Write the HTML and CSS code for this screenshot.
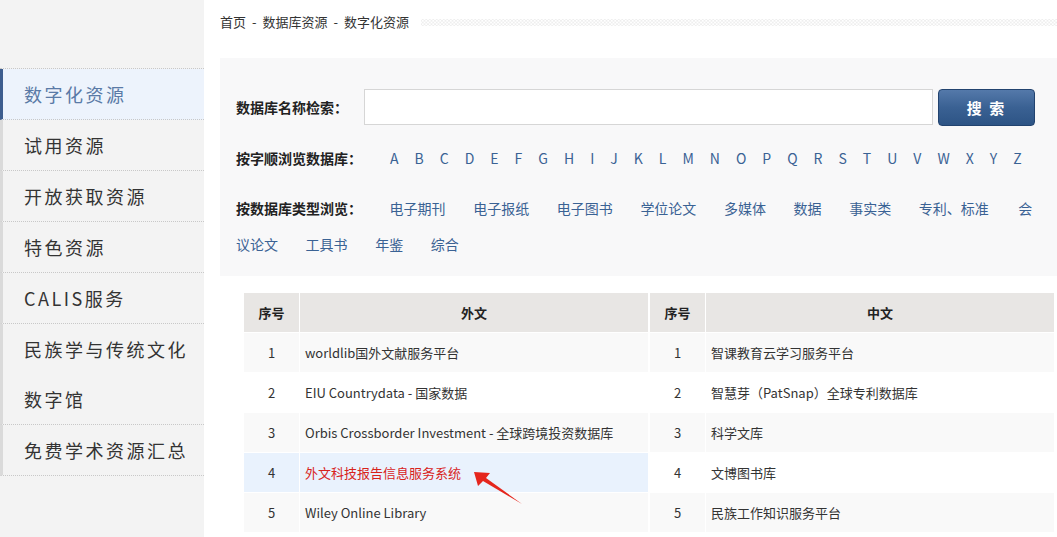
FILE: index.html
```html
<!DOCTYPE html>
<html lang="zh-CN">
<head>
    <meta charset="UTF-8">
    <meta name="viewport" content="width=device-width, initial-scale=1.0">
    <title>数字化资源</title>
    <link rel="stylesheet" href="styles.css">
</head>
<body>
    <div class="sidebar">
        <ul class="side-nav">
            <li class="active"><a href="#">数字化资源</a></li>
            <li><a href="#">试用资源</a></li>
            <li><a href="#">开放获取资源</a></li>
            <li><a href="#">特色资源</a></li>
            <li><a href="#">CALIS服务</a></li>
            <li><a href="#">民族学与传统文化数字馆</a></li>
            <li><a href="#">免费学术资源汇总</a></li>
        </ul>
    </div>

    <div class="main">
        <div class="crumbs">
            <span class="crumb-text"><a href="#">首页</a><span class="sep">-</span><a href="#">数据库资源</a><span class="sep">-</span><a href="#">数字化资源</a></span>
            <span class="crumb-line"></span>
        </div>

        <div class="search-panel">
            <form class="search-row">
                <label class="panel-label" for="dbName">数据库名称检索：</label>
                <input type="text" id="dbName">
                <button type="submit">搜 索</button>
            </form>

            <div class="letters">
                <span class="panel-label">按字顺浏览数据库：</span>
                <span class="letter-list">
                    <a href="#">A</a><a href="#">B</a><a href="#">C</a><a href="#">D</a><a href="#">E</a><a href="#">F</a><a href="#">G</a><a href="#">H</a><a href="#">I</a><a href="#">J</a><a href="#">K</a><a href="#">L</a><a href="#">M</a><a href="#">N</a><a href="#">O</a><a href="#">P</a><a href="#">Q</a><a href="#">R</a><a href="#">S</a><a href="#">T</a><a href="#">U</a><a href="#">V</a><a href="#">W</a><a href="#">X</a><a href="#">Y</a><a href="#">Z</a>
                </span>
            </div>

            <div class="types">
                <span class="panel-label">按数据库类型浏览：</span><a href="#">电子期刊</a><a href="#">电子报纸</a><a href="#">电子图书</a><a href="#">学位论文</a><a href="#">多媒体</a><a href="#">数据</a><a href="#">事实类</a><a href="#">专利、标准</a><a href="#">会议论文</a><a href="#">工具书</a><a href="#">年鉴</a><a href="#">综合</a>
            </div>
        </div>

        <div class="tables">
            <table class="db-table">
                <tr><th class="num">序号</th><th>外文</th></tr>
                <tr><td class="num">1</td><td><a href="#">worldlib国外文献服务平台</a></td></tr>
                <tr><td class="num">2</td><td><a href="#">EIU Countrydata - 国家数据</a></td></tr>
                <tr><td class="num">3</td><td><a href="#">Orbis Crossborder Investment - 全球跨境投资数据库</a></td></tr>
                <tr class="hover"><td class="num">4</td><td><a href="#">外文科技报告信息服务系统</a></td></tr>
                <tr><td class="num">5</td><td><a href="#">Wiley Online Library</a></td></tr>
            </table>
            <table class="db-table">
                <tr><th class="num">序号</th><th>中文</th></tr>
                <tr><td class="num">1</td><td><a href="#">智课教育云学习服务平台</a></td></tr>
                <tr><td class="num">2</td><td><a href="#">智慧芽（PatSnap）全球专利数据库</a></td></tr>
                <tr><td class="num">3</td><td><a href="#">科学文库</a></td></tr>
                <tr><td class="num">4</td><td><a href="#">文博图书库</a></td></tr>
                <tr><td class="num">5</td><td><a href="#">民族工作知识服务平台</a></td></tr>
            </table>

            <!-- annotation arrow pointing at row 4 -->
            <svg class="arrow" width="56" height="40" viewBox="0 0 56 40">
                <polygon points="4,5 20,6 16,11 52,37 13,14 8,19" fill="#e5261d"/>
            </svg>
        </div>
    </div>
</body>
</html>
```

FILE: styles.css
```css
body {
    margin: 0;
    font-family: "Noto Sans CJK SC", sans-serif;
    font-size: 13px;
    color: #333;
    background-color: #fff;
    display: flex;
    min-height: 100vh;
}

a {
    text-decoration: none;
    color: inherit;
}

/* sidebar */
.sidebar {
    width: 204px;
    flex-shrink: 0;
    background-color: #f3f3f3;
    padding-top: 68px;
}

.side-nav {
    list-style: none;
    margin: 0;
    padding: 0;
    border-top: 1px dotted #c8c8c8;
}

.side-nav li {
    border-left: 3px solid #dadada;
    border-bottom: 1px dotted #c8c8c8;
    padding: 0 8px 0 21px;
    font-size: 18px;
    line-height: 50px;
    letter-spacing: 2.5px;
    color: #333;
}

.side-nav li.active {
    border-left-color: #3d5d8e;
    background-color: #edf3fc;
    color: #5a7aa6;
}

/* main column */
.main {
    width: 837px;
    margin-left: 16px;
    flex-shrink: 0;
}

.crumbs {
    display: flex;
    align-items: center;
    margin-top: 14px;
    height: 16px;
    line-height: 16px;
    color: #333;
}

.crumbs .sep {
    margin: 0 6px;
}

.crumb-line {
    flex: 1;
    height: 7px;
    margin-left: 12px;
    background-image: radial-gradient(circle, transparent 0.8px, #d6d6d6 1.1px, transparent 1.6px);
    background-size: 3.5px 3.5px;
}

.search-panel {
    margin-top: 28px;
    background-color: #f8f8f9;
    padding: 31px 16px 14px;
}

.panel-label {
    font-size: 14px;
    font-weight: bold;
    color: #222;
}

.search-row {
    display: flex;
    align-items: center;
    height: 36px;
    margin: 0;
}

.search-row .panel-label {
    width: 128px;
}

.search-row input {
    width: 569px;
    height: 36px;
    box-sizing: border-box;
    border: 1px solid #d6d6d6;
    background-color: #fff;
    font-size: 14px;
    padding: 0 8px;
}

.search-row button {
    margin-left: 5px;
    width: 97px;
    height: 37px;
    border: 1px solid #22436f;
    border-radius: 4px;
    background: linear-gradient(#5479aa, #3a6193 50%, #2d5485);
    color: #fff;
    font-family: inherit;
    font-size: 15px;
    font-weight: bold;
    letter-spacing: 2px;
    cursor: pointer;
}

.letters {
    margin-top: 15px;
    line-height: 36px;
    display: flex;
}

.letter-list {
    margin-left: 20px;
    font-size: 14px;
    color: #3a6294;
}

.letter-list a {
    margin: 0 8px;
}

.types {
    margin-top: 14px;
    line-height: 36px;
    font-size: 14px;
    color: #3a6294;
    word-break: break-all;
}

.types a {
    margin-left: 27.6px;
}

.types a:nth-child(10) {
    margin-left: 29.6px;
}

/* tables */
.tables {
    position: relative;
    display: flex;
    margin: 16px 0 0 23px;
}

.db-table {
    width: 406px;
    border-collapse: collapse;
    table-layout: fixed;
}

.db-table th,
.db-table td {
    border: 1px solid #fff;
    height: 39px;
    padding: 0 5px;
    text-align: left;
}

.db-table th {
    background-color: #e8e6e4;
    font-weight: bold;
    color: #222;
    text-align: center;
}

.db-table .num {
    width: 45px;
    text-align: center;
}

.db-table tr:nth-child(even) td {
    background-color: #f9f9f9;
}

.db-table tr.hover td {
    background-color: #e9f2fd;
}

.db-table tr.hover a {
    color: #d8231c;
}

.arrow {
    position: absolute;
    left: 227px;
    top: 175px;
}
```
